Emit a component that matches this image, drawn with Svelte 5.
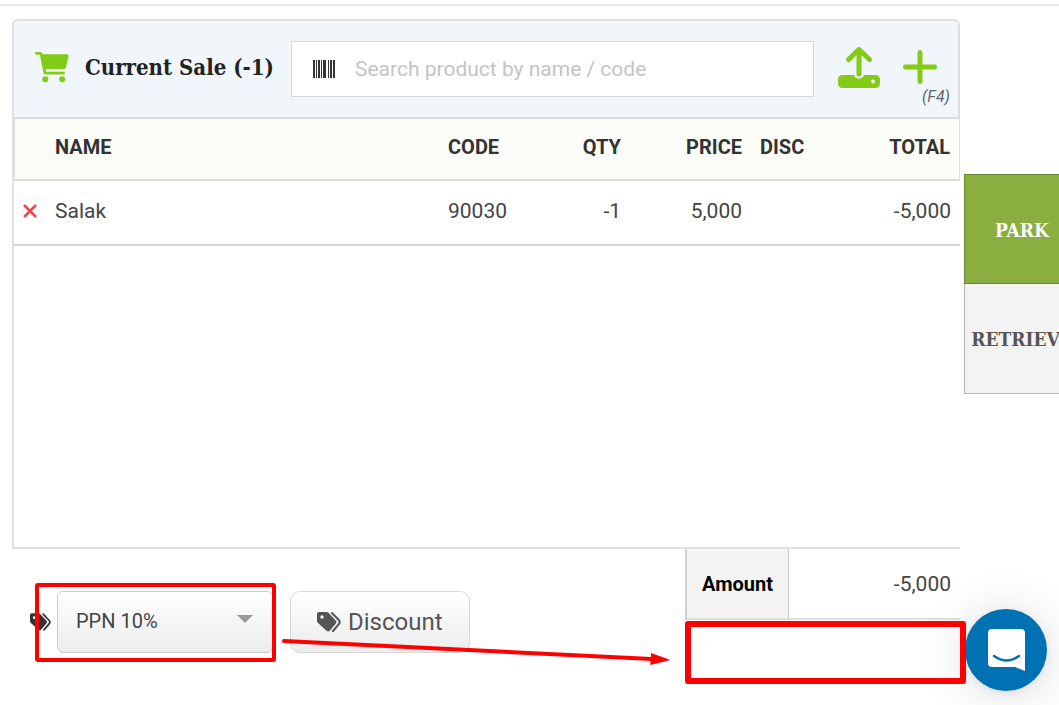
<script>
  let search = $state('');
  let tax = $state('PPN 10%');
  let items = $state([{ id: 1, name: 'Salak', code: '90030', qty: -1, price: 5000, disc: '' }]);

  const format = n => n.toLocaleString('en-US');

  let count = $derived(items.reduce((sum, i) => sum + i.qty, 0));
  let amount = $derived(items.reduce((sum, i) => sum + i.qty * i.price, 0));

  function remove(id) {
    items = items.filter(i => i.id !== id);
  }
</script>

{#snippet tags()}
  <svg class="tags" viewBox="0 0 24 20" aria-hidden="true">
    <path
      fill="currentColor"
      fill-rule="evenodd"
      d="M2 0H9.500Q10.700 0 11.500.8L18.700 8.400Q20.200 10 18.700 11.700L12.700 18.800Q11.200 20.400 9.600 18.800L1 11Q0 10 0 8.700V2Q0 0 2 0ZM5 3.300A1.700 1.700 0 1 0 5 6.700 1.700 1.700 0 1 0 5 3.300Z"
    />
    <path
      fill="none"
      stroke="currentColor"
      stroke-width="2"
      stroke-linecap="round"
      d="M15 1L22 8.300Q23.500 10 22 11.800L16 19"
    />
  </svg>
{/snippet}

<div class="page">
  <div class="topline"></div>
  <div class="layout">
    <main>
      <section class="sale">
        <header>
          <svg class="cart" viewBox="0 0 34 31" aria-hidden="true">
            <path
              fill="currentColor"
              d="M1.300 0H5.500Q7 0 7.400 1.600L7.500 2.200H32Q34 2.200 33.600 4.200L30.800 15.500Q30.400 17.200 28.600 17.200H10.600L11 19.800H28.500Q29.900 19.800 29.900 21.100T28.500 22.400H10Q8.800 22.400 8.500 21.100L4.900 2.700H1.300Q0 2.700 0 1.350T1.300 0Z"
            />
            <circle cx="10.300" cy="27.200" r="3" fill="currentColor" />
            <circle cx="27.200" cy="27.200" r="3" fill="currentColor" />
          </svg>
          <h1>Current Sale ({count})</h1>
          <label class="search">
            <svg viewBox="0 0 22 18" aria-hidden="true">
              <path
                fill="currentColor"
                d="M0 0h2v18H0zM3 0h1v18H3zM5 0h2v18H5zM8 0h1v18H8zM10 0h3v18h-3zM15 0h1v18h-1zM17 0h2v18h-2zM20 0h2v18h-2z"
              />
            </svg>
            <input type="text" placeholder="Search product by name / code" aria-label="Search product" bind:value={search} />
          </label>
          <button class="icon upload" aria-label="Upload">
            <svg viewBox="0 0 42 42" aria-hidden="true">
              <path
                fill="none"
                stroke="currentColor"
                stroke-width="5"
                stroke-linecap="round"
                stroke-linejoin="round"
                d="M21 28V4M10.500 13.500L21 3.500L31.500 13.500"
              />
              <path
                fill="currentColor"
                fill-rule="evenodd"
                d="M5 29H16Q17 32.500 21 32.500T26 29H37Q42 29 42 34V37Q42 42 37 42H5Q0 42 0 37V34Q0 29 5 29ZM35 33.500A2 2 0 1 0 35 37.500 2 2 0 1 0 35 33.500Z"
              />
            </svg>
          </button>
          <button class="icon add" aria-label="Add item">
            <svg viewBox="0 0 34 34" aria-hidden="true">
              <path stroke="currentColor" stroke-width="5" stroke-linecap="round" d="M17 2.500V31.500M2.500 17H31.500" />
            </svg>
            <em>(F4)</em>
          </button>
        </header>

        <table class="items">
          <thead>
            <tr>
              <th class="del"></th>
              <th>NAME</th>
              <th class="code">CODE</th>
              <th class="qty num">QTY</th>
              <th class="price num">PRICE</th>
              <th class="disc">DISC</th>
              <th class="total num">TOTAL</th>
            </tr>
          </thead>
          <tbody>
            {#each items as item (item.id)}
              <tr>
                <td class="del">
                  <button aria-label="Remove {item.name}" onclick={() => remove(item.id)}>
                    <svg viewBox="0 0 14 14" aria-hidden="true">
                      <path stroke="currentColor" stroke-width="2.500" d="M1 1L13 13M13 1L1 13" />
                    </svg>
                  </button>
                </td>
                <td>{item.name}</td>
                <td>{item.code}</td>
                <td class="num">{item.qty}</td>
                <td class="num">{format(item.price)}</td>
                <td>{item.disc}</td>
                <td class="num">{format(item.qty * item.price)}</td>
              </tr>
            {/each}
          </tbody>
        </table>
      </section>

      <footer>
        <div class="tax">
          {@render tags()}
          <div class="select">
            <select aria-label="Tax" bind:value={tax}>
              <option>PPN 10%</option>
            </select>
          </div>
          <div class="mark"></div>
        </div>
        <button class="discount">{@render tags()} Discount</button>
        <div class="totals">
          <table>
            <tbody>
              <tr>
                <th>Amount</th>
                <td>{format(amount)}</td>
              </tr>
            </tbody>
          </table>
          <div class="mark"></div>
        </div>
        <svg class="arrow" aria-hidden="true">
          <defs>
            <marker id="head" markerUnits="userSpaceOnUse" markerWidth="20" markerHeight="12" refX="1" refY="6" orient="auto">
              <path fill="#f00" d="M0 0L20 6L0 12Z" />
            </marker>
          </defs>
          <line x1="2" y1="3" x2="95%" y2="21" stroke="#f00" stroke-width="4" stroke-linecap="round" marker-end="url(#head)" />
        </svg>
      </footer>
    </main>

    <aside>
      <button class="park">PARK</button>
      <button>RETRIEVE</button>
    </aside>
  </div>

  <button class="chat" aria-label="Open chat">
    <svg viewBox="0 0 37 42" aria-hidden="true">
      <path fill="#fff" d="M4 0H33Q37 0 37 4V42L27 38H4Q0 38 0 34V4Q0 0 4 0Z" />
      <path fill="none" stroke="#0071b2" stroke-width="2.500" stroke-linecap="round" d="M6 27Q18.500 36 31 27" />
    </svg>
  </button>
</div>

<style>
  :global(body) {
    margin: 0;
    background: #fff;
  }

  .page {
    min-height: 100vh;
    overflow: hidden;
    box-sizing: border-box;
    padding-top: 4px;
    font-family: Roboto, sans-serif;
    font-size: 21px;
    color: #444;
  }
  button,
  input,
  select {
    font: inherit;
    color: inherit;
    padding: 0;
    border: 0;
    background: none;
  }
  svg {
    display: block;
    flex: none;
  }

  .topline {
    height: 2px;
    background: #e9ebee;
  }
  .layout {
    display: grid;
    grid-template-columns: minmax(0, 1fr) 95px;
    gap: 4px;
    padding: 13px 0 0 12px;
  }

  .sale {
    box-sizing: border-box;
    min-height: 530px;
    border: 2px solid #e0e0e0;
    border-right: 0;
    border-radius: 6px 6px 0 0;
  }
  header {
    display: flex;
    align-items: center;
    box-sizing: border-box;
    height: 98px;
    padding: 0 8px 4px 21px;
    background: #f0f6fa;
    border-right: 2px solid #ddd;
    border-bottom: 2px solid #ddd;
    border-radius: 4px 5px 0 0;
  }
  .cart {
    width: 34px;
    height: 31px;
    color: #83cb16;
  }
  h1 {
    margin: 0 21px 0 16px;
    width: 185px;
    flex: none;
    white-space: nowrap;
    font: bold 22px 'Roboto Slab', 'DejaVu Serif Condensed', 'DejaVu Serif', serif;
    color: #222;
  }
  .search {
    display: flex;
    align-items: center;
    gap: 20px;
    flex: 1;
    min-width: 0;
    box-sizing: border-box;
    height: 56px;
    margin-top: 4px;
    padding: 0 21px;
    background: #fff;
    border: 1px solid #d5d9dd;
    color: #333;
  }
  .search svg {
    width: 22px;
    height: 18px;
  }
  .search input {
    flex: 1;
    min-width: 0;
    outline: 0;
  }
  .search input::placeholder {
    color: #c4c4c4;
    opacity: 1;
  }
  .icon {
    color: #83cb16;
    cursor: pointer;
  }
  .upload {
    margin: 0 23px 0 24px;
  }
  .upload svg {
    width: 42px;
    height: 42px;
  }
  .add {
    position: relative;
    margin-right: 13px;
  }
  .add svg {
    width: 34px;
    height: 34px;
  }
  .add em {
    position: absolute;
    top: 37px;
    right: -13px;
    font-size: 16px;
    line-height: 20px;
    color: #666;
  }

  table {
    width: 100%;
    border-collapse: separate;
    border-spacing: 0;
  }
  .items {
    table-layout: fixed;
  }
  .items th,
  .items td {
    height: 56px;
    padding: 0 9px 4px;
    text-align: left;
    border-bottom: 2px solid #ddd;
  }
  .items td {
    height: 59px;
    border-color: #d4d4d4;
  }
  .items th {
    background: #fbfcf7;
    font-weight: bold;
    font-size: 20px;
    color: #333;
  }
  .items th:first-child {
    border-left: 1px solid #ddd;
  }
  .items th:last-child {
    border-right: 1px solid #ddd;
  }
  .items .num {
    text-align: right;
  }
  .items .del {
    width: 32px;
    box-sizing: border-box;
  }
  .del button {
    color: #f8414f;
    cursor: pointer;
  }
  .del svg {
    width: 14px;
    height: 14px;
  }
  .code {
    width: 73px;
  }
  .qty {
    width: 82px;
  }
  .price {
    width: 103px;
  }
  .disc {
    width: 72px;
  }
  .total {
    width: 100px;
  }

  footer {
    position: relative;
    display: flex;
    align-items: flex-start;
    padding-left: 18px;
  }
  .tags {
    width: 24px;
    height: 20px;
  }
  .tax {
    position: relative;
    display: flex;
    align-items: center;
    gap: 6px;
    margin: 42px 17px 0 0;
    color: #333;
  }
  .tax .tags {
    width: 21px;
    height: 18px;
  }
  .select {
    position: relative;
  }
  .select::after {
    content: '';
    position: absolute;
    top: 24px;
    right: 20px;
    border: 8px solid transparent;
    border-top-color: #999;
    border-bottom: 0;
    pointer-events: none;
  }
  select,
  .discount {
    box-sizing: border-box;
    height: 62px;
    border: 1px solid #ccc;
    border-radius: 6px;
    background: linear-gradient(#fff, #ececec);
  }
  select {
    appearance: none;
    width: 216px;
    padding: 0 40px 2px 18px;
    font-size: 20px;
    color: #444;
  }
  .discount {
    display: flex;
    align-items: center;
    gap: 7px;
    margin-top: 42px;
    padding: 0 26px;
    border-color: #d8d8d8;
    border-radius: 10px;
    font-size: 24px;
    color: #555;
    cursor: pointer;
  }

  .totals {
    position: relative;
    box-sizing: border-box;
    width: 275px;
    margin-left: auto;
    border-left: 2px solid #d0d0d0;
  }
  .totals th,
  .totals td {
    height: 69px;
    padding: 0 9px 0 0;
    border-bottom: 2px solid #ddd;
    text-align: right;
  }
  .totals th {
    width: 101px;
    padding: 0;
    background: #f4f4f4;
    border-right: 1px solid #ccc;
    text-align: center;
    color: #000;
    font-size: 20px;
  }

  .mark {
    position: absolute;
    z-index: 2;
    border: 4px solid #f00;
    border-radius: 3px;
    pointer-events: none;
  }
  .tax .mark {
    inset: -8px -3px -9px 5px;
  }
  .totals .mark {
    top: 72px;
    left: -2px;
    right: -6px;
    height: 51px;
    border-width: 6px;
  }
  .arrow {
    position: absolute;
    top: 89px;
    left: 270px;
    width: calc(100% - 559px);
    height: 30px;
    overflow: visible;
    pointer-events: none;
  }

  aside {
    padding-top: 155px;
  }
  aside button {
    display: block;
    box-sizing: border-box;
    width: 116px;
    height: 110px;
    background: #f3f3f3;
    border: 1px solid #b5b5b5;
    border-top: 0;
    font: bold 19px 'Roboto Slab', 'DejaVu Serif Condensed', 'DejaVu Serif', serif;
    color: #555;
    cursor: pointer;
  }
  aside .park {
    padding-top: 2px;
    background: #8aaf40;
    border: 1px solid #6b8932;
    color: #fff;
  }

  .chat {
    position: fixed;
    z-index: 1;
    right: 12px;
    bottom: 14px;
    display: grid;
    place-items: center;
    width: 82px;
    height: 82px;
    border-radius: 50%;
    background: #0071b2;
    box-shadow:
      0 2px 10px rgba(0, 0, 0, 0.08),
      0 4px 50px rgba(0, 0, 0, 0.14);
    cursor: pointer;
  }
  .chat svg {
    width: 37px;
    height: 42px;
  }
</style>
